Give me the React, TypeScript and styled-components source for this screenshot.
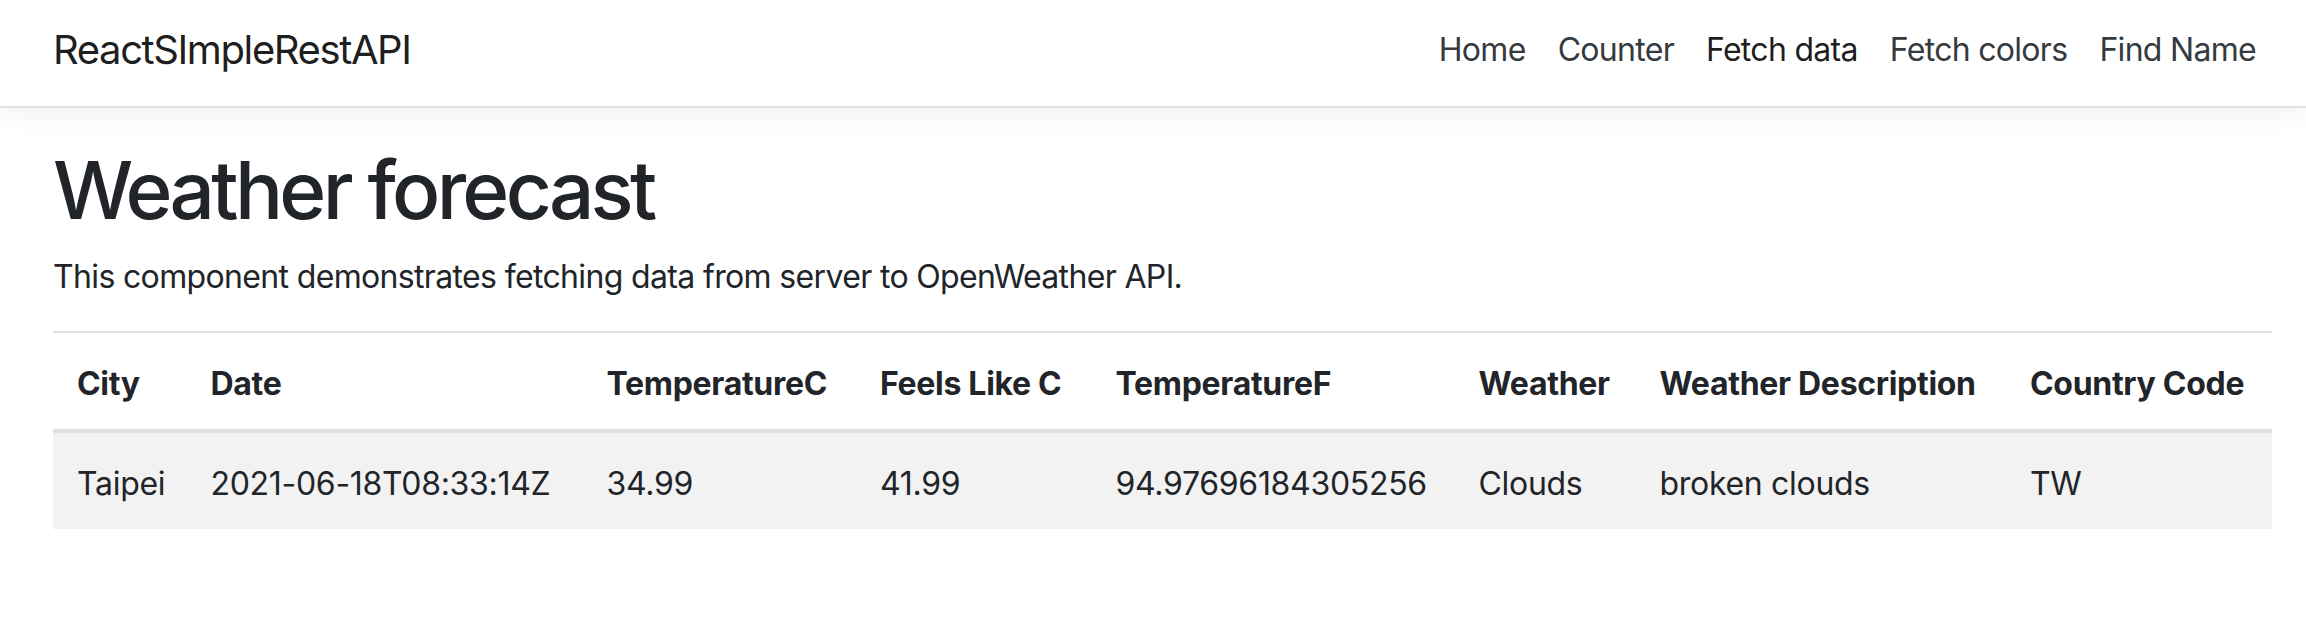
import styled, { createGlobalStyle } from "styled-components";

const GlobalStyle = createGlobalStyle`
  html, body {
    margin: 0;
    padding: 0;
    background: #fff;
    color: #212529;
    font-family: Inter, "Noto Sans", "Liberation Sans", sans-serif;
    font-size: 32px;
    line-height: 1.5;
  }
  * { box-sizing: border-box; }
`;

const columns = [
  { key: "city", title: "City", width: 133.5 },
  { key: "date", title: "Date", width: 396 },
  { key: "tempC", title: "TemperatureC", width: 273.5 },
  { key: "feelsC", title: "Feels Like C", width: 235.5 },
  { key: "tempF", title: "TemperatureF", width: 363 },
  { key: "weather", title: "Weather", width: 181 },
  { key: "desc", title: "Weather Description", width: 370.5 },
  { key: "country", title: "Country Code", width: 266 },
] as const;

const forecasts = [
  {
    city: "Taipei",
    date: "2021-06-18T08:33:14Z",
    tempC: "34.99",
    feelsC: "41.99",
    tempF: "94.97696184305256",
    weather: "Clouds",
    desc: "broken clouds",
    country: "TW",
  },
];

const links = [
  { label: "Home" },
  { label: "Counter" },
  { label: "Fetch data", active: true },
  { label: "Fetch colors" },
  { label: "Find Name" },
];

export default function App() {
  return (
    <>
      <GlobalStyle />
      <Header>
        <NavBar>
          <Brand href="#">ReactSImpleRestAPI</Brand>
          <NavList>
            {links.map((l) => (
              <li key={l.label}>
                <NavLink href="#" $active={!!l.active}>
                  {l.label}
                </NavLink>
              </li>
            ))}
          </NavList>
        </NavBar>
      </Header>
      <Container>
        <Title>Weather forecast</Title>
        <Lead>
          This component demonstrates fetching data from server to OpenWeather
          API.
        </Lead>
        <Table>
          <colgroup>
            {columns.map((c) => (
              <Col key={c.key} $w={c.width} />
            ))}
          </colgroup>
          <thead>
            <tr>
              {columns.map((c) => (
                <Th key={c.key}>{c.title}</Th>
              ))}
            </tr>
          </thead>
          <tbody>
            {forecasts.map((f, i) => (
              <Row key={f.date} $striped={i % 2 === 0}>
                {columns.map((c) => (
                  <Td key={c.key}>{f[c.key]}</Td>
                ))}
              </Row>
            ))}
          </tbody>
        </Table>
      </Container>
    </>
  );
}

const Header = styled.header`
  background: #fff;
  border-bottom: 2px solid #dee2e6;
  box-shadow: 0 8px 24px rgba(0, 0, 0, 0.05);
`;

const NavBar = styled.nav`
  display: flex;
  align-items: center;
  justify-content: space-between;
  height: 106px;
  padding: 0 34px 6px 53px;
`;

const Brand = styled.a`
  font-size: 40px;
  line-height: 60px;
  color: rgba(0, 0, 0, 0.9);
  text-decoration: none;
  letter-spacing: -1.4px;
`;

const NavList = styled.ul`
  display: flex;
  list-style: none;
  margin: 0;
  padding: 0;
`;

const NavLink = styled.a<{ $active: boolean }>`
  display: block;
  padding: 16px;
  font-size: 32px;
  line-height: 48px;
  letter-spacing: -0.7px;
  color: ${(p) => (p.$active ? "rgba(0, 0, 0, 0.9)" : "#343a40")};
  text-decoration: none;
`;

const Container = styled.main`
  padding: 34px 34px 0 53px;
`;

const Title = styled.h1`
  margin: 0 0 15px;
  font-size: 80px;
  font-weight: 500;
  line-height: 1.2;
  letter-spacing: -3.7px;
`;

const Lead = styled.p`
  margin: 0 0 30px;
  letter-spacing: -0.65px;
`;

const Table = styled.table`
  width: 100%;
  table-layout: fixed;
  border-collapse: collapse;
  color: #212529;
`;

const Col = styled.col<{ $w: number }>`
  width: ${(p) => p.$w}px;
`;

const Th = styled.th`
  text-align: left;
  font-weight: 700;
  padding: 27px 24px 21px;
  border-top: 2px solid #dee2e6;
  border-bottom: 4px solid #dee2e6;
  white-space: nowrap;
  letter-spacing: -0.3px;
`;

const Row = styled.tr<{ $striped: boolean }>`
  background: ${(p) => (p.$striped ? "#f2f2f2" : "transparent")};
`;

const Td = styled.td`
  padding: 27px 24px 21px;
  white-space: nowrap;
  letter-spacing: -0.3px;
`;
